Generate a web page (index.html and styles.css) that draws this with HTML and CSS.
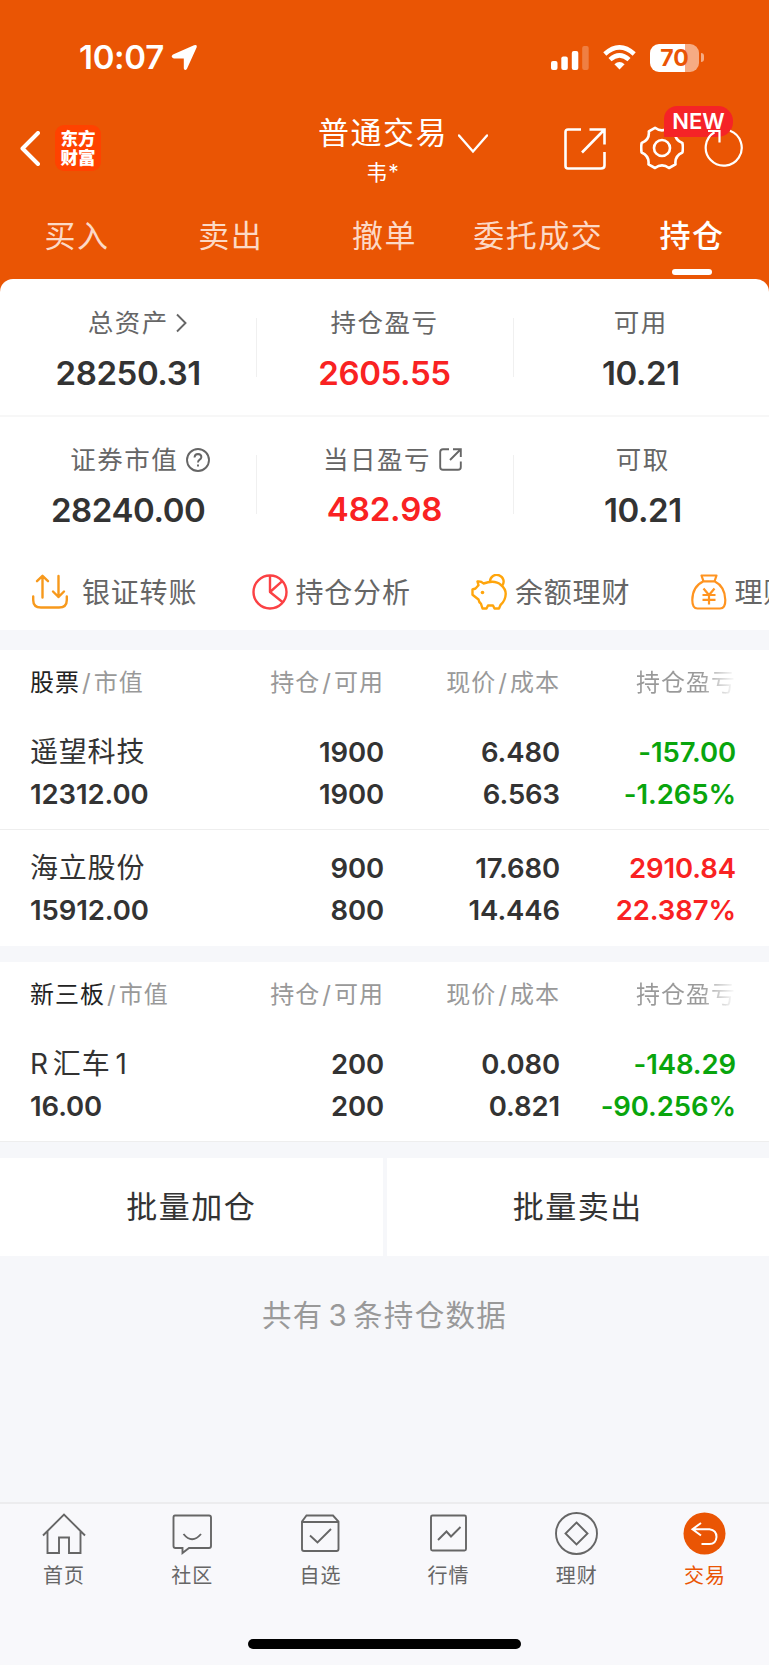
FILE: index.html
```
<!DOCTYPE html>
<html lang="zh-CN">
<head>
<meta charset="utf-8">
<title>普通交易 - 持仓</title>
<link rel="stylesheet" href="styles.css">
</head>
<body>

<div class="top">
  <div class="status">
    <span class="time">10:07</span>
    <svg class="loc" width="27" height="27" viewBox="0 0 27 27"><path d="M2 10.500 L23 1.300 Q26.500 .3 25.600 3.500 L16 24.800 Q14 27.500 12.800 24.400 V14.600 H2.800 Q-1 13 2 10.500Z" fill="#fff"/></svg>
    <svg class="signal" width="38" height="24" viewBox="0 0 38 24" fill="#fff">
      <rect x="0" y="15" width="6.500" height="9" rx="2"/>
      <rect x="10.300" y="10.500" width="6.500" height="13.500" rx="2"/>
      <rect x="20.800" y="5" width="6.500" height="19" rx="2"/>
      <rect x="31.200" y="0" width="6.500" height="24" rx="2" opacity=".25"/>
    </svg>
    <svg class="wifi" width="33" height="25" viewBox="0 0 33 25" fill="none" stroke="#fff" stroke-width="4.600">
      <path d="M1.800 9 Q16.500 -4.200 31.200 9"/>
      <path d="M7 14.600 Q16.500 6.200 26 14.600"/>
      <path d="M16.500 24.500 L11.400 19.300 Q16.500 14.800 21.600 19.300Z" fill="#fff" stroke="none"/>
    </svg>
    <span class="battery">70</span>
    <span class="nub"></span>
  </div>

  <div class="nav">
    <svg class="back" width="20" height="35" viewBox="0 0 20 35"><path d="M18 2 L2.500 17.500 L18 33" fill="none" stroke="#fff" stroke-width="4" stroke-linecap="round" stroke-linejoin="round"/></svg>
    <div class="logo">东方<br>财富</div>
    <div class="account">
      <div class="name">普通交易</div>
      <div class="user">韦*</div>
    </div>
    <svg class="drop" width="30" height="20" viewBox="0 0 30 20"><path d="M1 1.500 L15 17.500 L29 1.500" fill="none" stroke="#fff" stroke-width="2.400" stroke-linecap="round"/></svg>
    <svg class="share" width="42" height="42" viewBox="0 0 42 42" fill="none" stroke="#fff" stroke-width="2.600">
      <path d="M17 1.500 H4 Q1.500 1.500 1.500 4 V38 Q1.500 40.500 4 40.500 H37 Q40.500 40.500 40.500 37.500 V24"/>
      <path d="M25.500 1.500 H40.500 V16.500 M40 2 L18 24.500"/>
    </svg>
    <svg class="gear" width="44" height="44" viewBox="0 0 44 44" fill="none" stroke="#fff" stroke-width="2.600" stroke-linejoin="round">
      <path d="M15 1.800 Q22 7 29 1.800 L35.200 5.300 Q34.200 14 42.400 17 Q43.400 22 42.400 26.500 Q34.500 30 35.500 38.300 L29 42 Q22 36.600 15 42 L8.500 38.300 Q9.500 30 1.600 26.500 Q.8 22 1.600 17 Q9.800 14 8.800 5.300 Z"/>
      <circle cx="22" cy="22" r="8"/>
    </svg>
    <span class="badge">NEW</span>
    <svg class="refresh" width="40" height="40" viewBox="0 0 40 40" fill="none" stroke="#fff" stroke-width="2.200">
      <path d="M26 2.800 A18 18 0 1 1 10.500 4.200"/>
      <path d="M4 3 H15.500 V14.500"/>
    </svg>
  </div>

  <div class="tabs">
    <div class="tab">买入</div>
    <div class="tab">卖出</div>
    <div class="tab">撤单</div>
    <div class="tab">委托成交</div>
    <div class="tab active">持仓</div>
  </div>
</div>

<div class="summary">
  <div class="sumrow">
    <div class="cell">
      <div class="label">总资产<svg class="more" width="11" height="20" viewBox="0 0 11 20"><path d="M1 1.500 L9.500 10 L1 18.500"/></svg></div>
      <div class="value">28250.31</div>
    </div>
    <div class="cell">
      <div class="label">持仓盈亏</div>
      <div class="value red">2605.55</div>
    </div>
    <div class="cell">
      <div class="label">可用</div>
      <div class="value">10.21</div>
    </div>
  </div>
  <div class="sumrow second">
    <div class="cell">
      <div class="label">证券市值<svg class="help" width="24" height="24" viewBox="0 0 24 24"><circle cx="12" cy="12" r="11"/><path d="M8.500 9.500 Q8.700 6 12 6 Q15.500 6.200 15.400 9.200 Q15.200 10.800 13.400 11.900 Q12 12.800 12 14.600"/><path d="M12 16.500 V18.500"/></svg></div>
      <div class="value">28240.00</div>
    </div>
    <div class="cell">
      <div class="label">当日盈亏<svg class="open" width="23" height="23" viewBox="0 0 23 23"><path d="M10 1.200 H4 Q1.200 1.200 1.200 4 V19 Q1.200 21.800 4 21.800 H19 Q21.800 21.800 21.800 19 V13.500 M14 1.200 H21.800 V9 M21.500 1.500 L11 12"/></svg></div>
      <div class="value red up">482.98</div>
    </div>
    <div class="cell right">
      <div class="label">可取</div>
      <div class="value">10.21</div>
    </div>
  </div>
  <div class="tools">
    <div class="tool first">
      <svg width="36" height="36" viewBox="0 0 36 36" fill="none" stroke="#f7991c" stroke-width="2.400" stroke-linecap="round" stroke-linejoin="round">
        <path d="M1.200 22.500 V26 Q1.200 33.500 9 33.500 H27 Q34.800 33.500 34.800 26 V22.500"/>
        <path d="M10.500 23.500 V2 M5 7.200 L10.500 1.800 L16 7.200 M26.500 2 V23 M21 17.500 L26.500 23 L32 17.500"/>
      </svg><span>银证转账</span>
    </div>
    <div class="tool">
      <svg width="36" height="36" viewBox="0 0 36 36" fill="none" stroke="#fb4144" stroke-width="2.400" stroke-linejoin="round">
        <circle cx="18" cy="18" r="16.500"/>
        <path d="M18 1.500 V18 L30.500 6.800 M18 18 L31 28.500"/>
      </svg><span>持仓分析</span>
    </div>
    <div class="tool">
      <svg width="36" height="36" viewBox="0 0 36 36" fill="none" stroke="#ffa50c" stroke-width="2.400" stroke-linejoin="round">
        <path d="M19 7.500 A6.800 6.800 0 1 1 31 12"/>
        <path d="M6.500 7.500 Q10 7 12.500 9.500 Q24 5.500 30 11 Q34.800 15 34.700 20 Q34.500 26.500 29.500 31 L28 34.500 H23.500 L22 31.500 H17 L15.500 34.500 H11.500 L10 29.800 Q8 28.600 7.500 25.500 L1.500 20.800 V15.500 L4.500 14.500 L7.500 11.300 Z"/>
        <circle cx="11.500" cy="18.500" r="1.800" fill="#ffa50c" stroke="none"/>
      </svg><span>余额理财</span>
    </div>
    <div class="tool">
      <svg width="36" height="36" viewBox="0 0 36 36" fill="none" stroke="#ff9420" stroke-width="2.200" stroke-linejoin="round">
        <path d="M10.500 1.500 H25.500 L23.500 7.300 H12.500 Z M12.500 7.300 Q1.500 12.500 1.300 26 Q1.300 34.500 6.500 34.500 H29 Q34.500 34.500 34.300 26 Q34 12.500 23.500 7.300"/>
        <path d="M12.500 14.500 L18 21 L23.500 14.500 M18 21 V30.500 M11.500 21 H24.500 M11.500 25.800 H24.500"/>
      </svg><span>理财</span>
    </div>
  </div>
</div>

<div class="block">
  <div class="row head">
    <div><b>股票</b><i>/</i>市值</div>
    <div>持仓<i>/</i>可用</div>
    <div>现价<i>/</i>成本</div>
    <div class="fade">持仓盈亏</div>
  </div>
  <div class="row">
    <div><span class="stock">遥望科技</span><br>12312.00</div>
    <div>1900<br>1900</div>
    <div>6.480<br>6.563</div>
    <div class="green">-157.00<br>-1.265%</div>
  </div>
  <div class="row line">
    <div><span class="stock">海立股份</span><br>15912.00</div>
    <div>900<br>800</div>
    <div>17.680<br>14.446</div>
    <div class="red">2910.84<br>22.387%</div>
  </div>
</div>

<div class="block last">
  <div class="row head">
    <div><b>新三板</b><i>/</i>市值</div>
    <div>持仓<i>/</i>可用</div>
    <div>现价<i>/</i>成本</div>
    <div class="fade">持仓盈亏</div>
  </div>
  <div class="row">
    <div><span class="stock"><span class="r">R</span>汇车<span class="n">1</span></span><br>16.00</div>
    <div>200<br>200</div>
    <div>0.080<br>0.821</div>
    <div class="green">-148.29<br>-90.256%</div>
  </div>
</div>

<div class="batch">
  <div>批量加仓</div>
  <div>批量卖出</div>
</div>
<p class="total">共有<span class="count">3</span>条持仓数据</p>

<div class="bottom">
  <div class="menu">
    <div class="item">
      <svg width="44" height="44" viewBox="0 0 44 44"><path d="M1 23.500 L22 2.500 L43 23.500 M5.500 19.500 V41 H17 V25.500 H27 V41 H38.500 V19.500"/></svg>
      首页
    </div>
    <div class="item">
      <svg width="44" height="44" viewBox="0 0 44 44"><path d="M5 3.500 H39 Q41 3.500 41 5.500 V34 Q41 36 39 36 H19 L12.500 41 V36 H5.500 Q3.500 36 3.500 34 V5.500 Q3.500 3.500 5 3.500Z M13.500 22 Q22 32.500 31 22"/></svg>
      社区
    </div>
    <div class="item">
      <svg width="44" height="44" viewBox="0 0 44 44"><path d="M8.500 3.500 H35 L40.500 9.500 V37 Q40.500 39 38.500 39 H6 Q4 39 4 37 V9.500 Z M4 10 H40.500 M12 23.500 L19.500 30.500 L33 17"/></svg>
      自选
    </div>
    <div class="item">
      <svg width="44" height="44" viewBox="0 0 44 44"><rect x="4" y="3.500" width="35" height="35" rx="1.500"/><path d="M11 28 L19.500 19.500 L24 24.500 L33.500 15"/></svg>
      行情
    </div>
    <div class="item">
      <svg width="44" height="44" viewBox="0 0 44 44"><circle cx="21.500" cy="21.500" r="20.500"/><path d="M21.500 10.500 L32.500 21.500 L21.500 32.500 L10.500 21.500Z"/></svg>
      理财
    </div>
    <div class="item on">
      <svg width="44" height="44" viewBox="0 0 44 44"><circle class="disc" cx="21.500" cy="21.500" r="21"/><path class="arrow" d="M18 11 L9.500 17.200 L18 23.500 M9.500 17.200 H26.500 Q33.500 18 33.500 25 Q33 32 26.500 32 H18.500"/></svg>
      交易
    </div>
  </div>
  <div class="homebar"></div>
</div>

</body>
</html>
```
FILE: styles.css
```
* {
  box-sizing: border-box;
}
body {
  margin: 0;
  width: 769px;
  height: 1665px;
  overflow: hidden;
  display: flex;
  flex-direction: column;
  background: #f6f7fa;
  color: #333;
  font-family: Inter, "Noto Sans CJK SC", sans-serif;
}
svg {
  display: block;
  flex: none;
}
.top {
  height: 292px;
  background: #ea5504;
  color: #fff;
}

/* status bar */
.status {
  display: flex;
  align-items: center;
  height: 72px;
  padding: 43px 0 0 79px;
}
.time {
  width: 92px;
  font-size: 33px;
  font-weight: 600;
  line-height: 29px;
  letter-spacing: -.3px;
}
.signal {
  margin-left: 353px;
}
.wifi {
  margin-left: 14px;
}
.battery {
  width: 49px;
  height: 28px;
  margin-left: 14px;
  border-radius: 9px;
  background: linear-gradient(90deg, #fff 71%, #f6ab83 71%);
  color: #ea5504;
  font-size: 23px;
  font-weight: 700;
  line-height: 28px;
  text-align: center;
}
.nub {
  width: 3px;
  height: 9px;
  margin-left: 2px;
  border-radius: 0 3px 3px 0;
  background: #f6ab83;
}

/* title */
.nav {
  position: relative;
  display: flex;
  height: 128px;
}
.back {
  margin: 59px 0 0 20px;
}
.logo {
  width: 46px;
  height: 46px;
  margin: 53px 0 0 15px;
  padding-top: 4px;
  border-radius: 9px;
  background: #ff4200;
  font-size: 17.500px;
  font-weight: 900;
  line-height: 19px;
  text-align: center;
}
.account {
  width: 130px;
  margin: 37px 0 0 217px;
  text-align: center;
}
.name {
  font-size: 31px;
  line-height: 48px;
  letter-spacing: 1.500px;
  white-space: nowrap;
}
.user {
  font-size: 21px;
  line-height: 32px;
  letter-spacing: 1px;
}
.drop {
  margin: 62px 0 0 10px;
}
.share {
  margin: 56px 0 0 76px;
}
.gear {
  margin: 54px 0 0 34px;
}
.badge {
  position: absolute;
  left: 664px;
  top: 34px;
  width: 69px;
  height: 31px;
  border-radius: 13px 15px 15px 0;
  background: #f52327;
  font-size: 22px;
  font-weight: 600;
  line-height: 31px;
  text-align: center;
}
.refresh {
  position: relative;
  margin: 56px 0 0 20px;
}

.tabs {
  display: grid;
  grid-template-columns: repeat(5, 1fr);
}
.tab {
  display: flex;
  flex-direction: column;
  align-items: center;
  height: 75px;
  padding-top: 12px;
  font-size: 31px;
  line-height: 48px;
  letter-spacing: 1.500px;
  color: #fcd9c6;
}
.active {
  color: #fff;
  font-weight: 500;
}
.active::after {
  content: "";
  width: 40px;
  height: 6px;
  margin-top: 9px;
  border-radius: 3px;
  background: #fff;
}

/* assets */
.summary {
  height: 351px;
  margin-top: -13px;
  border-radius: 13px 13px 0 0;
  background: #fff;
  overflow: hidden;
}
.sumrow {
  display: grid;
  grid-template-columns: repeat(3, 1fr);
  height: 138px;
  padding-top: 23px;
  border-bottom: 2px solid #f7f7f7;
}
.second {
  height: 135px;
  padding-top: 22px;
  border-bottom: 0;
}
.cell {
  text-align: center;
}
.cell + .cell {
  background: linear-gradient(#f0f0f0, #f0f0f0) 0 16px / 1px 59px no-repeat;
}
.right {
  padding-left: 4px;
}
.label {
  display: flex;
  align-items: center;
  justify-content: center;
  height: 40px;
  padding-bottom: 4px;
  font-size: 25.500px;
  letter-spacing: 1.500px;
  color: #666;
}
.label svg {
  margin-top: 5px;
  fill: none;
  stroke: #666;
  stroke-width: 1.900;
}
.more {
  margin-left: 7px;
  margin-right: -18px;
}
.help, .open {
  margin-left: 8px;
}
.help {
  margin-right: -24px;
}
.open {
  margin-right: -16px;
}
.value {
  height: 62px;
  font-size: 33px;
  font-weight: 600;
  line-height: 62px;
  letter-spacing: -.4px;
}
.up {
  line-height: 60px;
  letter-spacing: -.1px;
}
.red {
  color: #f92222;
}
.green {
  color: #09a50d;
}
.tools {
  display: flex;
  padding: 18px 0 0 32px;
}
.tool {
  display: flex;
  flex: none;
  align-items: center;
  gap: 8px;
  width: 219.500px;
  height: 44px;
  font-size: 28px;
  letter-spacing: .8px;
  color: #666;
}
.tool span {
  padding-bottom: 2px;
}
.first {
  gap: 14px;
}

/* positions */
.block {
  margin-top: 16px;
  background: #fff;
}
.summary + .block {
  margin-top: 20px;
}
.row {
  display: grid;
  grid-template-columns: 208px 146px 176px 176px;
  height: 116px;
  padding: 18px 0 0 30px;
  font-size: 27.500px;
  font-weight: 600;
  line-height: 42px;
  letter-spacing: -.1px;
  text-align: right;
}
.row div:first-child {
  text-align: left;
}
.line {
  height: 117px;
  padding-top: 17px;
  border-top: 1px solid #eee;
}
.last {
  border-bottom: 1px solid #eee;
}
.head {
  height: 63px;
  padding-top: 12px;
  font-size: 24px;
  font-weight: 400;
  letter-spacing: 1px;
  color: #999;
}
.head b {
  font-weight: 400;
  color: #222;
}
.head i {
  margin: 0 2px;
  font-style: normal;
}
.fade {
  background: linear-gradient(90deg, #999 80%, #fff);
  -webkit-background-clip: text;
  background-clip: text;
  color: transparent;
}
.stock {
  font-size: 28px;
  font-weight: 400;
  letter-spacing: .8px;
}
.r {
  margin-right: 4px;
}
.n {
  margin-left: 5px;
}

.batch {
  display: grid;
  grid-template-columns: 1fr 1fr;
  gap: 4px;
  margin-top: 16px;
}
.batch div {
  height: 98px;
  background: #fff;
  font-size: 31px;
  line-height: 98px;
  letter-spacing: 1.500px;
  text-align: center;
}
.total {
  margin: 34px 0 0;
  font-size: 29.500px;
  line-height: 50px;
  letter-spacing: 1.300px;
  text-align: center;
  color: #999;
}
.count {
  margin: 0 5px;
}

/* bottom menu */
.bottom {
  height: 163px;
  margin-top: auto;
  border-top: 2px solid #ececee;
  background: #f8f8fb;
}
.menu {
  display: grid;
  grid-template-columns: repeat(6, 1fr);
  height: 135px;
  padding-top: 8px;
}
.item {
  display: flex;
  flex-direction: column;
  align-items: center;
  font-size: 20px;
  line-height: 40px;
  letter-spacing: 1px;
  color: #666;
}
.item svg {
  fill: none;
  stroke: #666;
  stroke-width: 1.900;
}
.on {
  color: #ea5504;
}
.item .disc {
  fill: #ea5504;
  stroke: none;
}
.item .arrow {
  stroke: #fff;
  stroke-width: 2;
}
.homebar {
  width: 273px;
  height: 10px;
  margin: 0 auto;
  border-radius: 5px;
  background: #000;
}
```
